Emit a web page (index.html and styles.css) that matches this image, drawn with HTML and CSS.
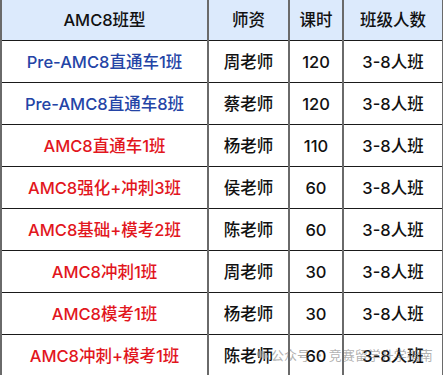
FILE: index.html
```html
<!DOCTYPE html>
<html lang="zh">
<head>
<meta charset="utf-8">
<link rel="stylesheet" href="styles.css">
</head>
<body>
<div class="wrap">
<table class="tbl">
  <colgroup>
    <col class="c1"><col class="c2"><col class="c3"><col class="c4">
  </colgroup>
  <thead>
    <tr class="head"><th>AMC8班型</th><th>师资</th><th>课时</th><th>班级人数</th></tr>
  </thead>
  <tbody>
    <tr><td class="blue">Pre-AMC8直通车1班</td><td>周老师</td><td>120</td><td>3-8人班</td></tr>
    <tr><td class="blue">Pre-AMC8直通车8班</td><td>蔡老师</td><td>120</td><td>3-8人班</td></tr>
    <tr><td class="red">AMC8直通车1班</td><td>杨老师</td><td>110</td><td>3-8人班</td></tr>
    <tr><td class="red">AMC8强化+冲刺3班</td><td>侯老师</td><td>60</td><td>3-8人班</td></tr>
    <tr><td class="red">AMC8基础+模考2班</td><td>陈老师</td><td>60</td><td>3-8人班</td></tr>
    <tr><td class="red">AMC8冲刺1班</td><td>周老师</td><td>30</td><td>3-8人班</td></tr>
    <tr><td class="red">AMC8模考1班</td><td>杨老师</td><td>30</td><td>3-8人班</td></tr>
    <tr><td class="red">AMC8冲刺+模考1班</td><td>陈老师</td><td>60</td><td>3-8人班</td></tr>
  </tbody>
</table>
<div class="watermark">
  <svg class="wm-icon" width="11" height="10" viewBox="0 0 22 20"><ellipse cx="8" cy="8" rx="8" ry="6.5" fill="#9a9a9a"/><ellipse cx="15" cy="12.5" rx="6.5" ry="5.5" fill="#b4b4b4"/></svg>
  <span>公众号 · 竞赛留学升学指南</span>
</div>
</div>
</body>
</html>
```
FILE: styles.css
```css
html, body {
  margin: 0;
  padding: 0;
  background: #ffffff;
}
.wrap {
  position: relative;
  width: 443px;
  height: 375px;
  overflow: hidden;
}
.tbl {
  border-collapse: collapse;
  table-layout: fixed;
  width: 442px;
  font-family: Inter, "Noto Sans CJK SC", "Noto Sans", sans-serif;
  font-size: 16.5px;
  color: #111111;
}
.c1 { width: 207px; }
.c2 { width: 81px; }
.c3 { width: 54px; }
.c4 { width: 100px; }
.tbl th, .tbl td {
  text-align: center;
  vertical-align: middle;
  padding: 0;
  border-left: 2px solid #6a6a6a;
  border-right: 2px solid #6a6a6a;
  border-top: 1.5px solid #1a1a1a;
  border-bottom: 1.5px solid #1a1a1a;
  white-space: nowrap;
  line-height: 22px;
}
.tbl th {
  font-weight: 500;
  background: #dceafc;
  border-top: none;
  height: 40px;
}
.tbl td {
  height: 41px;
  font-weight: 500;
}
.num {
  letter-spacing: 0.5px;
}
.blue { color: #2444a6; }
.red { color: #e2161d; }
.watermark {
  position: absolute;
  left: 257px;
  top: 347px;
  display: flex;
  align-items: center;
  gap: 3px;
  font-family: "Noto Sans CJK SC", sans-serif;
  font-size: 13px;
  line-height: 16px;
  color: rgba(110, 110, 110, 0.55);
  pointer-events: none;
}
.wm-icon { opacity: 0.6; }
```
